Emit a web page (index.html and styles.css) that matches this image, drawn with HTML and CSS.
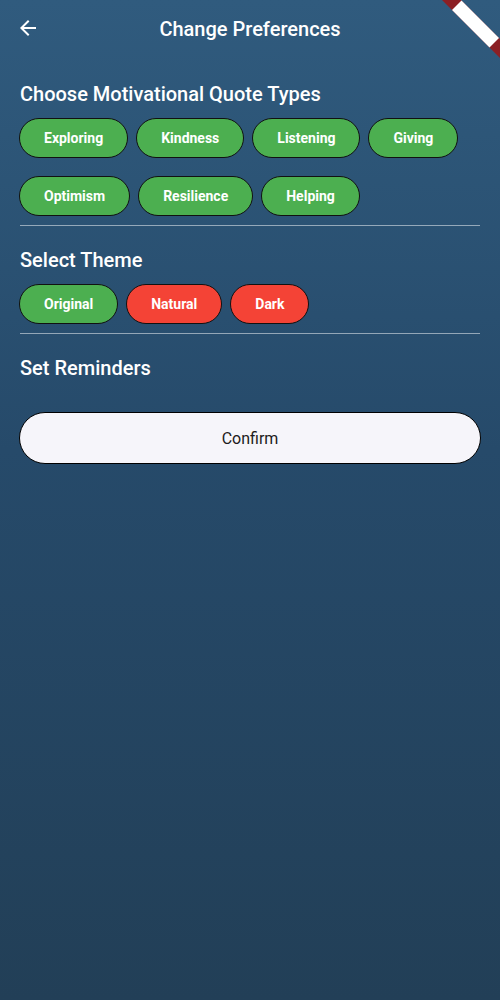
FILE: index.html
```html
<!DOCTYPE html>
<html lang="en">
<head>
<meta charset="utf-8">
<title>Change Preferences</title>
<link rel="stylesheet" href="styles.css">
</head>
<body>
<div class="screen">
  <header class="appbar">
    <svg class="back" width="24" height="24" viewBox="0 0 24 24" aria-hidden="true"><path fill="#fff" d="M20 11H7.83l5.59-5.59L12 4l-8 8 8 8 1.41-1.41L7.83 13H20v-2z"/></svg>
    <h1 class="title">Change Preferences</h1>
  </header>
  <main class="content">
    <h2 class="heading first">Choose Motivational Quote Types</h2>
    <div class="chips quotes">
      <span class="chip green">Exploring</span>
      <span class="chip green">Kindness</span>
      <span class="chip green">Listening</span>
      <span class="chip green">Giving</span>
      <span class="chip green">Optimism</span>
      <span class="chip green">Resilience</span>
      <span class="chip green">Helping</span>
    </div>
    <hr class="divider">
    <h2 class="heading">Select Theme</h2>
    <div class="chips">
      <span class="chip green">Original</span>
      <span class="chip red">Natural</span>
      <span class="chip red">Dark</span>
    </div>
    <hr class="divider">
    <h2 class="heading">Set Reminders</h2>
    <button class="confirm">Confirm</button>
  </main>
  <svg class="banner" width="60" height="60" viewBox="0 0 60 60" aria-hidden="true">
    <polygon fill="#8b1f24" points="2,0 21,0 60,39 60,58"/>
    <polygon fill="#ffffff" points="12,10 21.5,0.5 59,38 49.5,47.5"/>
  </svg>
</div>
</body>
</html>
```

FILE: styles.css
```css
html, body {
  margin: 0;
  padding: 0;
}
body {
  width: 500px;
  height: 1000px;
  font-family: Roboto, "Liberation Sans", sans-serif;
  background: linear-gradient(180deg, #305b7e 0%, #264a6a 45%, #223f57 100%);
  color: #fff;
  overflow: hidden;
}
.screen {
  position: relative;
  height: 1000px;
}
.appbar {
  height: 56px;
  display: flex;
  align-items: center;
  justify-content: center;
  position: relative;
}
.back {
  position: absolute;
  left: 16px;
  top: 16px;
}
.title {
  margin: 0;
  font-size: 20px;
  font-weight: 500;
  line-height: 24px;
  padding-top: 2px;
}
.content {
  padding: 0 20px;
  display: flex;
  flex-direction: column;
}
.heading {
  margin: 22px 0 12px;
  font-size: 20px;
  font-weight: 500;
  line-height: 24px;
}
.heading.first {
  margin-top: 26px;
}
.chips {
  display: flex;
  flex-wrap: wrap;
  column-gap: 8px;
  row-gap: 18px;
  margin-left: -1px;
}
.chip {
  box-sizing: border-box;
  height: 40px;
  padding: 0 24px;
  border: 1px solid #111;
  border-radius: 20px;
  display: inline-flex;
  align-items: center;
  font-size: 14px;
  font-weight: 700;
  color: #fff;
}
.chip.green { background: #4caf50; }
.chip.red { background: #f44336; }
.divider {
  border: 0;
  height: 1px;
  background: rgba(255, 255, 255, 0.5);
  margin: 9px 0 0;
}
.confirm {
  margin: 20px -1px 0;
  height: 52px;
  border: 1px solid #000;
  border-radius: 26px;
  background: #f6f5fa;
  font-family: Roboto, "Liberation Sans", sans-serif;
  font-size: 16px;
  color: #1d1b20;
}
.banner {
  position: absolute;
  top: 0;
  right: 0;
}
```
